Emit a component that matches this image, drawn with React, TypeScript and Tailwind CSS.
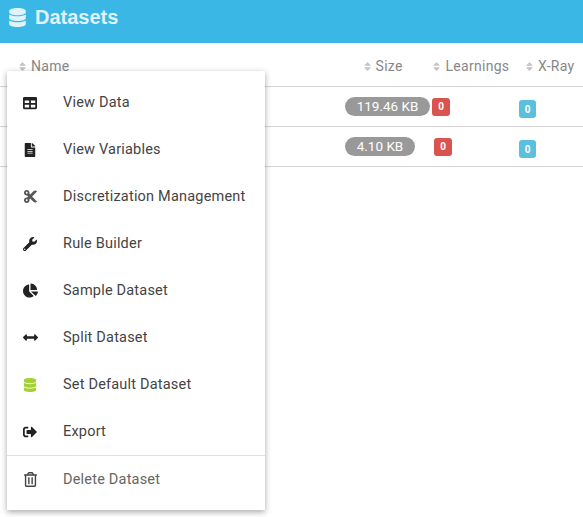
import { FaDatabase, FaTable, FaFileAlt, FaCut, FaWrench, FaChartPie, FaArrowsAltH, FaSignOutAlt, FaRegTrashAlt, FaSort } from 'react-icons/fa';

const menuItems = [
    { label: 'View Data', icon: <FaTable size={14} /> },
    { label: 'View Variables', icon: <FaFileAlt size={14} /> },
    { label: 'Discretization Management', icon: <FaCut size={15} className="text-[#555]" /> },
    { label: 'Rule Builder', icon: <FaWrench size={14} /> },
    { label: 'Sample Dataset', icon: <FaChartPie size={15} /> },
    { label: 'Split Dataset', icon: <FaArrowsAltH size={15} /> },
    { label: 'Set Default Dataset', icon: <FaDatabase size={14} className="text-[#a4d233]" /> },
    { label: 'Export', icon: <FaSignOutAlt size={14} /> },
];

const HeaderCell = ({ label, className }: { label: string; className: string }) => (
    <div className={`flex items-center gap-[3px] ${className}`}>
        <FaSort size={11} className="text-[#c4c4c4]" />
        <span className="whitespace-nowrap">{label}</span>
    </div>
);

const Row = ({ size, sizeClass }: { size: string; sizeClass: string }) => (
    <div className="flex h-10 items-center border-b border-[#d4d4d4]">
        <div className="w-[345px]" />
        <div className={`flex h-[19px] shrink-0 items-center justify-center rounded-[10px] bg-[#999] text-[13.5px] text-white ${sizeClass}`}>
            {size}
        </div>
        <div className="ml-[2px] flex h-[18px] w-[18px] shrink-0 items-center justify-center rounded-[3px] bg-[#d9534f] text-[10px] font-bold text-white">
            0
        </div>
    </div>
);

export default function App() {
    return (
        <div className="relative h-[517px] w-[583px] overflow-hidden bg-white font-['Roboto',sans-serif]">
            <header className="flex h-[43px] items-start gap-[8px] bg-[#3bb7e6] pl-2 pt-[5px] font-['Liberation_Sans',sans-serif] text-[20px] font-bold leading-6 text-[#dff3fb]">
                <FaDatabase size={19} className="mt-[3px]" />
                <span>Datasets</span>
            </header>

            <div className="flex h-[44px] items-center border-b border-[#d4d4d4] pt-1 text-[14px] tracking-[0.3px] text-[#888]">
                <HeaderCell label="Name" className="w-[363px] pl-[17px]" />
                <HeaderCell label="Size" className="ml-[4px] w-[71px]" />
                <HeaderCell label="Learnings" className="w-[94px]" />
                <HeaderCell label="X-Ray" className="w-[60px]" />
            </div>

            <div className="relative">
                <Row size="119.46 KB" sizeClass="w-[85px]" />
                <Row size="4.10 KB" sizeClass="mr-[17px] w-[70px]" />
                <span className="absolute left-[519px] top-[13px] flex h-[18px] w-[17px] items-center justify-center rounded-[3px] bg-[#5bc0de] text-[10px] font-bold text-white">
                    0
                </span>
                <span className="absolute left-[519px] top-[53px] flex h-[18px] w-[17px] items-center justify-center rounded-[3px] bg-[#5bc0de] text-[10px] font-bold text-white">
                    0
                </span>
            </div>

            <div className="absolute left-[7px] top-[71px] flex h-[439px] w-[258px] flex-col bg-white py-2 shadow-[0_2px_6px_rgba(0,0,0,0.35)]">
                {menuItems.map((item) => (
                    <div key={item.label} className="flex h-[47px] shrink-0 items-center text-[14.5px] tracking-[0.2px] text-[#444]">
                        <span className="flex w-[56px] justify-center pr-[10px] text-[#222]">{item.icon}</span>
                        <span>{item.label}</span>
                    </div>
                ))}
                <div className="flex h-[48px] shrink-0 items-center border-t border-[#e0e0e0] text-[14.5px] tracking-[0.2px] text-[#666]">
                    <span className="flex w-[56px] justify-center pr-[10px] text-[#444]">
                        <FaRegTrashAlt size={15} />
                    </span>
                    <span>Delete Dataset</span>
                </div>
            </div>
        </div>
    );
}
